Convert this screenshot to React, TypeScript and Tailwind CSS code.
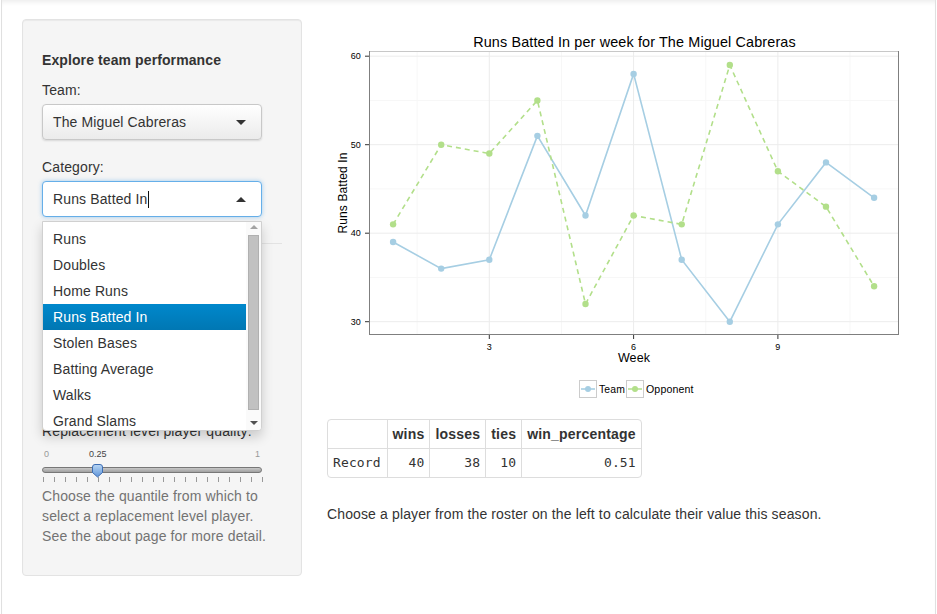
import React from "react";

const team = [39, 36, 37, 51, 42, 58, 37, 30, 41, 48, 44];
const opp = [41, 50, 49, 55, 32, 42, 41, 59, 47, 43, 34];
const xw = (w: number) => 489.3 + (w - 3) * 48.1;
const yv = (v: number) => 321.7 - (v - 30) * 8.85;

const TEAM = "#a6cee3";
const OPP = "#b2df8a";
const FONT = "Liberation Sans, Arial, sans-serif";

function Chart() {
  const teamPts = team.map((v, i) => `${xw(i + 1)},${yv(v)}`).join(" ");
  const oppPts = opp.map((v, i) => `${xw(i + 1)},${yv(v)}`).join(" ");
  const L = 370, R = 898, T = 52, B = 334;
  return (
    <svg width={603} height={390} className="block">
      <g transform="translate(-327,-20)" fontFamily={FONT}>
        <rect x={L} y={T} width={R - L} height={B - T} fill="#fff" />
        {[1.5, 4.5, 7.5, 10.5].map((w) => (
          <line key={"mx" + w} x1={xw(w)} x2={xw(w)} y1={T} y2={B} stroke="#f7f7f7" strokeWidth={1} />
        ))}
        {[35, 45, 55].map((v) => (
          <line key={"my" + v} x1={L} x2={R} y1={yv(v)} y2={yv(v)} stroke="#f7f7f7" strokeWidth={1} />
        ))}
        {[3, 6, 9].map((w) => (
          <line key={"Mx" + w} x1={xw(w)} x2={xw(w)} y1={T} y2={B} stroke="#ececec" strokeWidth={1} />
        ))}
        {[30, 40, 50, 60].map((v) => (
          <line key={"My" + v} x1={L} x2={R} y1={yv(v)} y2={yv(v)} stroke="#ececec" strokeWidth={1} />
        ))}
        <polyline points={teamPts} fill="none" stroke={TEAM} strokeWidth={1.6} />
        <polyline points={oppPts} fill="none" stroke={OPP} strokeWidth={1.6} strokeDasharray="5 4" />
        {team.map((v, i) => (
          <circle key={"t" + i} cx={xw(i + 1)} cy={yv(v)} r={3.2} fill={TEAM} />
        ))}
        {opp.map((v, i) => (
          <circle key={"o" + i} cx={xw(i + 1)} cy={yv(v)} r={3.2} fill={OPP} />
        ))}
        <line x1={L} x2={R} y1={T - 0.5} y2={T - 0.5} stroke="#c8c8c8" />
        <line x1={L - 0.5} x2={L - 0.5} y1={T - 1} y2={B + 0.5} stroke="#7f7f7f" />
        <line x1={R + 0.5} x2={R + 0.5} y1={T - 1} y2={B + 0.5} stroke="#7f7f7f" />
        <line x1={L - 1} x2={R + 1} y1={B + 0.5} y2={B + 0.5} stroke="#7f7f7f" />
        {[30, 40, 50, 60].map((v) => (
          <g key={"yt" + v}>
            <line x1={365} x2={369} y1={yv(v)} y2={yv(v)} stroke="#333" />
            <text x={361} y={yv(v) + 3.2} fontSize={9} textAnchor="end" fill="#000">
              {v}
            </text>
          </g>
        ))}
        {[3, 6, 9].map((w) => (
          <g key={"xt" + w}>
            <line x1={xw(w)} x2={xw(w)} y1={B + 1} y2={B + 5} stroke="#333" />
            <text x={xw(w)} y={350} fontSize={9} textAnchor="middle" fill="#000">
              {w}
            </text>
          </g>
        ))}
        <text x={634.5} y={47.3} fontSize={14.4} textAnchor="middle" fill="#000">
          Runs Batted In per week for The Miguel Cabreras
        </text>
        <text x={634} y={361.7} fontSize={12.5} textAnchor="middle" fill="#000">
          Week
        </text>
        <text
          x={0}
          y={0}
          fontSize={12}
          textAnchor="middle"
          fill="#000"
          transform={`translate(347,${(T + B) / 2}) rotate(-90)`}
        >
          Runs Batted In
        </text>
        <rect x={579.5} y={380.5} width={17} height={17} fill="#fff" stroke="#cccccc" />
        <line x1={581} x2={595} y1={389} y2={389} stroke={TEAM} strokeWidth={1.6} />
        <circle cx={588} cy={389} r={3} fill={TEAM} />
        <text x={599} y={393.3} fontSize={10.4} fill="#000">
          Team
        </text>
        <rect x={626.5} y={380.5} width={17} height={17} fill="#fff" stroke="#cccccc" />
        <line x1={628} x2={642} y1={389} y2={389} stroke={OPP} strokeWidth={1.6} strokeDasharray="5 4" />
        <circle cx={635} cy={389} r={3} fill={OPP} />
        <text x={646} y={393.3} fontSize={10.6} fill="#000">
          Opponent
        </text>
      </g>
    </svg>
  );
}

function Slider() {
  const ticks = Array.from({ length: 21 }, (_, i) => i);
  return (
    <div className="relative w-[220px] h-[45px] tracking-normal">
      <div className="absolute left-[2px] top-[8px] text-[9px] leading-[10px] text-[#999]">0</div>
      <div className="absolute left-[47px] top-[8px] text-[9px] leading-[10px] text-[#444]">0.25</div>
      <div className="absolute left-[213px] top-[8px] text-[9px] leading-[10px] text-[#999]">1</div>
      <div className="absolute left-0 top-[26px] w-[220px] h-[6px] rounded-[3px] border border-[#777777] bg-gradient-to-b from-[#c8c8c8] to-[#a0a0a0]" />
      <svg className="absolute left-[49px] top-[23px]" width={13} height={14} viewBox="0 0 13 14">
        <defs>
          <linearGradient id="hg" x1="0" y1="0" x2="0" y2="1">
            <stop offset="0" stopColor="#b9d7f5" />
            <stop offset="1" stopColor="#5d93d8" />
          </linearGradient>
        </defs>
        <path d="M1.5 3 Q1.5 0.5 4 0.5 L9 0.5 Q11.5 0.5 11.5 3 L11.5 8.5 L6.5 13 L1.5 8.5 Z" fill="url(#hg)" stroke="#3d6db3" strokeWidth={1} />
      </svg>
      {ticks.map((i) => (
        <div
          key={i}
          className="absolute top-[36px] w-px h-[5px] bg-[#999]"
          style={{ left: `${Math.round(0.7 + i * 10.98)}px` }}
        />
      ))}
    </div>
  );
}

const items = ["Runs", "Doubles", "Home Runs", "Runs Batted In", "Stolen Bases", "Batting Average", "Walks", "Grand Slams"];

function Sidebar() {
  return (
    <div className="ml-[20px] mt-[19px] w-[280px] h-[557px] shrink-0 rounded-[4px] border border-[#e3e3e3] bg-[#f5f5f5] px-[19px] pt-[30px] shadow-[inset_0_1px_1px_rgba(0,0,0,0.05)]">
      <div className="h-[20px] leading-[20px] font-bold tracking-[0.1px]">Explore team performance</div>
      <div className="mt-[10px] h-[20px] leading-[20px]">Team:</div>
      <div className="mt-[4px] w-[220px] h-[36px] rounded-[4px] border border-[#c8c8c8] bg-gradient-to-b from-[#ffffff] to-[#ebebeb] shadow-[0_1px_2px_rgba(0,0,0,0.12)] flex items-center pl-[10px] pr-[15px] justify-between">
        <span className="leading-[20px]">The Miguel Cabreras</span>
        <span className="w-0 h-0 border-l-[5px] border-r-[5px] border-t-[5px] border-l-transparent border-r-transparent border-t-[#333]" />
      </div>
      <div className="mt-[17px] h-[20px] leading-[20px]">Category:</div>
      <div className="relative mt-[4px] w-[220px]">
        <div className="h-[36px] rounded-[4px] border border-[#66afe9] bg-white shadow-[0_0_4px_rgba(102,175,233,0.6)] flex items-center pl-[10px] pr-[15px] justify-between">
          <span className="flex items-center leading-[20px]">
            Runs Batted In
            <span className="ml-[1px] inline-block w-px h-[17px] bg-[#111]" />
          </span>
          <span className="w-0 h-0 border-l-[5px] border-r-[5px] border-b-[5px] border-l-transparent border-r-transparent border-b-[#333]" />
        </div>
        <div className="absolute left-0 top-[40px] z-10 w-[220px] h-[210px] overflow-hidden rounded-b-[4px] border border-[#d0d0d0] bg-white shadow-[0_6px_12px_rgba(0,0,0,0.175)] flex">
          <div className="flex-1 pt-[4px]">
            {items.map((it) => (
              <div
                key={it}
                className={
                  it === "Runs Batted In"
                    ? "h-[26px] leading-[26px] pl-[10px] text-white bg-gradient-to-b from-[#0088cc] to-[#0077b3]"
                    : "h-[26px] leading-[26px] pl-[10px] text-[#333]"
                }
              >
                {it}
              </div>
            ))}
          </div>
          <div className="w-[15px] bg-[#fafafa] flex flex-col items-center">
            <span className="mt-[3px] w-0 h-0 border-l-[4px] border-r-[4px] border-b-[4px] border-l-transparent border-r-transparent border-b-[#a3a3a3]" />
            <div className="mt-[6px] w-[11px] h-[175px] bg-[#c1c1c1] border border-[#b0b0b0]" />
            <span className="mt-[11px] w-0 h-0 border-l-[4px] border-r-[4px] border-t-[4px] border-l-transparent border-r-transparent border-t-[#505050]" />
          </div>
        </div>
      </div>
      <div className="mt-[26px] h-px bg-[#e3e3e3]" />
      <div className="mt-[177px] h-[20px] leading-[20px]">Replacement level player quality:</div>
      <Slider />
      <div className="w-[232px] leading-[20px] text-[#737373]">
        Choose the quantile from which to select a replacement level player. See the about page for more detail.
      </div>
    </div>
  );
}

function Main() {
  return (
    <div className="ml-[25px] pt-[20px]">
      <Chart />
      <div className="mt-[9px] inline-block rounded-[4px] border border-[#dddddd] overflow-hidden">
        <table className="border-collapse">
          <thead>
            <tr className="h-[28px]">
              <th className="w-[59px] px-[5px]"></th>
              <th className="border-l border-[#dddddd] px-[5px] text-left font-bold leading-[20px] tracking-[0.2px]">wins</th>
              <th className="border-l border-[#dddddd] px-[5px] text-left font-bold leading-[20px] tracking-[0.2px]">losses</th>
              <th className="border-l border-[#dddddd] px-[5px] text-left font-bold leading-[20px] tracking-[0.2px]">ties</th>
              <th className="border-l border-[#dddddd] px-[5px] text-left font-bold leading-[20px] tracking-[0.2px]">win_percentage</th>
            </tr>
          </thead>
          <tbody className="font-['DejaVu_Sans_Mono',monospace] text-[13px]">
            <tr className="h-[29px] border-t border-[#dddddd]">
              <td className="px-[5px] text-left">Record</td>
              <td className="border-l border-[#dddddd] px-[5px] text-right">40</td>
              <td className="border-l border-[#dddddd] px-[5px] text-right">38</td>
              <td className="border-l border-[#dddddd] px-[5px] text-right">10</td>
              <td className="border-l border-[#dddddd] px-[5px] text-right">0.51</td>
            </tr>
          </tbody>
        </table>
      </div>
      <div className="mt-[20px] leading-[20px]">
        Choose a player from the roster on the left to calculate their value this season.
      </div>
    </div>
  );
}

export default function App() {
  return (
    <div className="w-[937px] h-[614px] bg-white overflow-hidden font-['Liberation_Sans',Arial,sans-serif] text-[14px] tracking-[0.13px] text-[#333]">
      <div className="ml-[1px] w-[935px] h-[614px] border-x border-[#e0e0e0] flex items-start shadow-[inset_0_5px_5px_-3px_rgba(0,0,0,0.08)]">
        <Sidebar />
        <Main />
      </div>
    </div>
  );
}
